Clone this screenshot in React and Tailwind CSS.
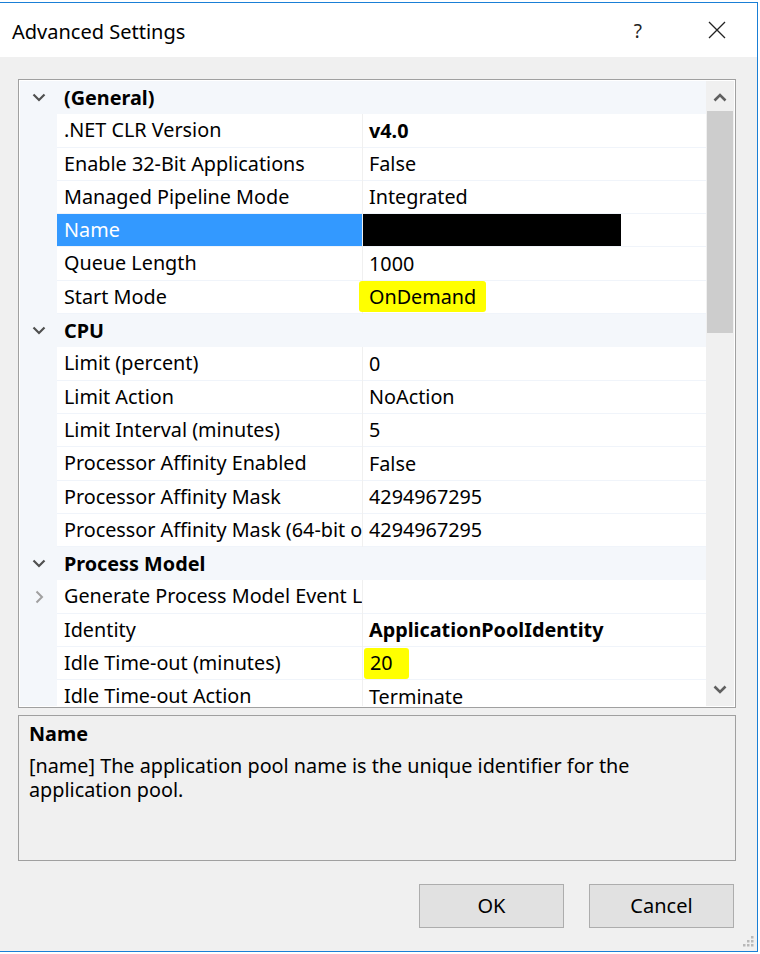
import React from 'react'

const rows = [
  { cat: '(General)' },
  { n: '.NET CLR Version', v: 'v4.0', bold: true },
  { n: 'Enable 32-Bit Applications', v: 'False' },
  { n: 'Managed Pipeline Mode', v: 'Integrated' },
  { n: 'Name', selected: true, redacted: true },
  { n: 'Queue Length', v: '1000' },
  { n: 'Start Mode', v: 'OnDemand', hl: 'ml-[-4px] pl-[4px] pr-[10px]' },
  { cat: 'CPU' },
  { n: 'Limit (percent)', v: '0' },
  { n: 'Limit Action', v: 'NoAction' },
  { n: 'Limit Interval (minutes)', v: '5' },
  { n: 'Processor Affinity Enabled', v: 'False' },
  { n: 'Processor Affinity Mask', v: '4294967295' },
  { n: 'Processor Affinity Mask (64-bit option)', v: '4294967295' },
  { cat: 'Process Model' },
  { n: 'Generate Process Model Event Log Entry', v: '', expand: true },
  { n: 'Identity', v: 'ApplicationPoolIdentity', bold: true },
  { n: 'Idle Time-out (minutes)', v: '20', hl: 'ml-px pr-[16px]' },
  { n: 'Idle Time-out Action', v: 'Terminate' },
]

function ChevronDown({ color = '#505050' }) {
  return (
    <svg width="14" height="9" viewBox="0 0 14 9">
      <path d="M1.5 1.5 L7 7 L12.5 1.5" fill="none" stroke={color} strokeWidth="2.2" />
    </svg>
  )
}

function ChevronRight() {
  return (
    <svg width="9" height="14" viewBox="0 0 9 14">
      <path d="M1.5 1.5 L7 7 L1.5 12.5" fill="none" stroke="#a0a0a0" strokeWidth="2" />
    </svg>
  )
}

function ScrollArrow({ d }) {
  return (
    <svg width="14" height="9" viewBox="0 0 14 9">
      <path d={d} fill="none" stroke="#606060" strokeWidth="2.6" />
    </svg>
  )
}

function Row({ r }) {
  if (r.cat) {
    return (
      <div className="flex h-[33.3px] items-center bg-[#f4f7fb]">
        <div className="flex w-[37px] shrink-0 justify-center pl-[1px]">
          <ChevronDown />
        </div>
        <div className="pl-[7px] font-bold">{r.cat}</div>
      </div>
    )
  }
  return (
    <div className="flex h-[33.3px]">
      <div className="flex w-[37px] shrink-0 items-center justify-center bg-[#f4f7fb] pl-[1px]">
        {r.expand && <ChevronRight />}
      </div>
      <div
        className={
          'w-[305px] shrink-0 overflow-hidden whitespace-nowrap border-b border-[#f0f4fa] pl-[7px] leading-[32px] ' +
          (r.selected ? 'bg-[#3399ff] text-white' : 'bg-white')
        }
      >
        {r.n}
      </div>
      <div className="w-px shrink-0 bg-[#f0f0f0]" />
      <div className="flex flex-1 items-center whitespace-nowrap border-b border-[#f0f4fa] bg-white">
        {r.redacted ? (
          <div className="h-full w-[258px] bg-black" />
        ) : r.hl ? (
          <span className={'flex h-[31px] items-center rounded-[3px] bg-[#ffff00] ' + r.hl}>
            <span className="pl-[6px]">{r.v}</span>
          </span>
        ) : (
          <span className={'pl-[6px] ' + (r.bold ? 'font-bold' : '')}>{r.v}</span>
        )}
      </div>
    </div>
  )
}

export default function App() {
  return (
    <div
      className="h-[954px] w-[760px] overflow-hidden bg-white pt-[2px] text-[19.8px] text-black"
      style={{ fontFamily: '"Noto Sans", "Open Sans", sans-serif' }}
    >
      <div className="relative ml-[-1px] flex h-[950px] w-[759px] flex-col border border-[#1a7fd6]">
        {/* title bar */}
        <div className="flex h-[54px] shrink-0 items-center bg-white">
          <div className="pl-[12px] pt-[3px] text-[20px]">Advanced Settings</div>
          <div className="ml-auto flex items-center">
            <span className="pr-[66px] pt-[2px] text-[19px] text-[#222]">?</span>
            <svg width="18" height="18" viewBox="0 0 18 18" className="mr-[31px]">
              <path d="M1 1 L17 17 M17 1 L1 17" stroke="#222" strokeWidth="1.3" />
            </svg>
          </div>
        </div>

        {/* body */}
        <div className="flex flex-1 flex-col bg-[#f0f0f0] pl-[18px] pr-[21px] pt-[22px]">
          <div className="flex h-[629px] border border-[#a0a0a0] bg-white p-px">
            <div className="flex-1 overflow-hidden">
              {rows.map((r, i) => (
                <Row key={i} r={r} />
              ))}
            </div>
            <div className="flex w-[28px] shrink-0 flex-col bg-[#f0f0f0]">
              <div className="flex h-[30px] items-center justify-center pt-[3px]">
                <ScrollArrow d="M1.5 7.5 L7 2 L12.5 7.5" />
              </div>
              <div className="mx-[1px] h-[222px] bg-[#cdcdcd]" />
              <div className="flex-1" />
              <div className="flex h-[30px] items-center justify-center pb-[4px]">
                <ScrollArrow d="M1.5 1.5 L7 7 L12.5 1.5" />
              </div>
            </div>
          </div>

          {/* description */}
          <div className="mt-[7px] h-[146px] border border-[#a0a0a0] px-[10px] pt-[3px]">
            <div className="font-bold">Name</div>
            <div className="mt-[5px] leading-[24px]">
              [name] The application pool name is the unique identifier for the application pool.
            </div>
          </div>

          {/* buttons */}
          <div className="mt-[23px] flex justify-end gap-[25px] pr-[2px]">
            <button className="h-[44px] w-[145px] border border-[#adadad] bg-[#e1e1e1] text-[20px]">OK</button>
            <button className="h-[44px] w-[145px] border border-[#adadad] bg-[#e1e1e1] text-[20px]">Cancel</button>
          </div>
        </div>

        {/* resize grip */}
        <svg width="14" height="14" viewBox="0 0 14 14" className="absolute bottom-[3px] right-[3px]">
          {[
            [11, 2],
            [11, 6],
            [7, 6],
            [11, 10],
            [7, 10],
            [3, 10],
          ].map(([x, y], i) => (
            <rect key={i} x={x} y={y} width="2.5" height="2.5" fill="#b8b8b8" />
          ))}
        </svg>
      </div>
    </div>
  )
}
